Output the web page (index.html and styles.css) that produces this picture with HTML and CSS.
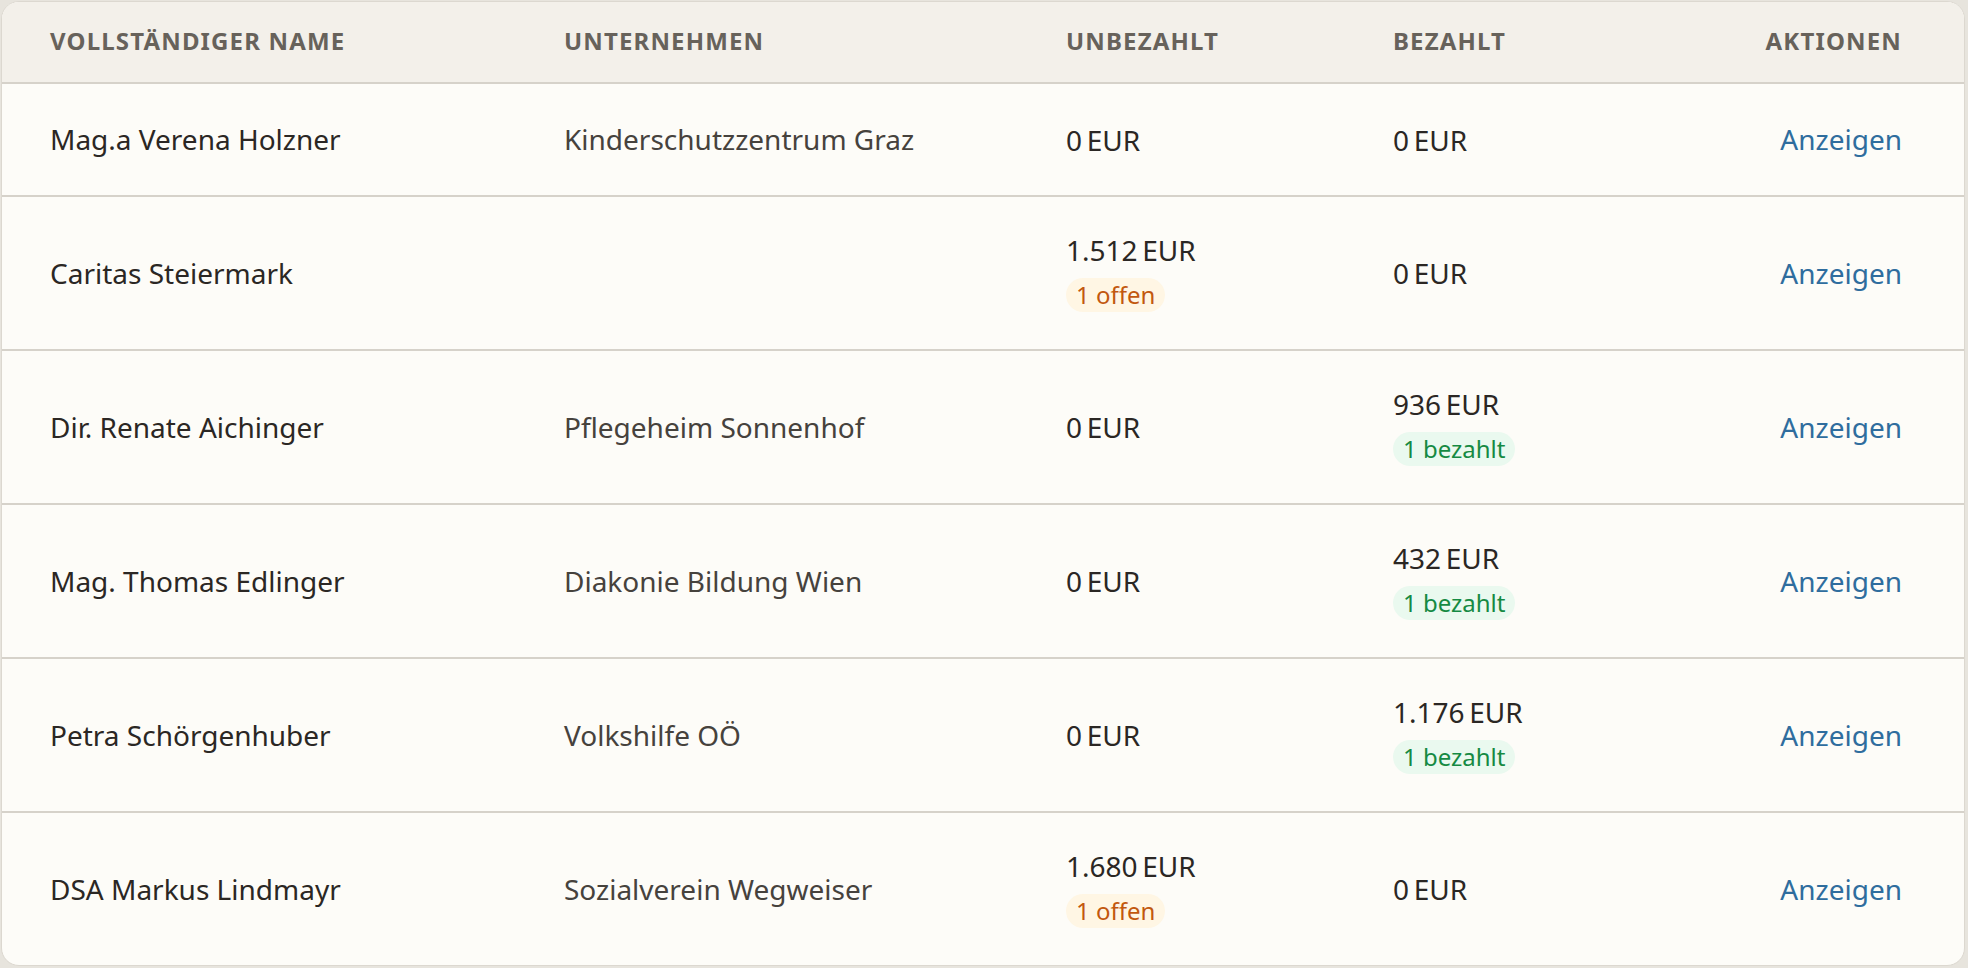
FILE: index.html
```html
<!DOCTYPE html>
<html lang="de">
<head>
<meta charset="utf-8">
<title>Kunden</title>
<link rel="stylesheet" href="styles.css">
</head>
<body>
<div class="card">
  <table class="tbl">
    <colgroup>
      <col class="c-name">
      <col class="c-company">
      <col class="c-unpaid">
      <col class="c-paid">
      <col class="c-actions">
    </colgroup>
    <thead>
      <tr>
        <th>Vollständiger Name</th>
        <th>Unternehmen</th>
        <th>Unbezahlt</th>
        <th>Bezahlt</th>
        <th class="right">Aktionen</th>
      </tr>
    </thead>
    <tbody>
      <tr>
        <td class="name">Mag.a Verena Holzner</td>
        <td class="company">Kinderschutzzentrum Graz</td>
        <td><div class="amount">0&#8239;EUR</div></td>
        <td><div class="amount">0&#8239;EUR</div></td>
        <td class="right"><a class="link" href="#">Anzeigen</a></td>
      </tr>
      <tr>
        <td class="name">Caritas Steiermark</td>
        <td class="company"></td>
        <td><div class="amount">1.512&#8239;EUR</div><span class="badge open">1 offen</span></td>
        <td><div class="amount">0&#8239;EUR</div></td>
        <td class="right"><a class="link" href="#">Anzeigen</a></td>
      </tr>
      <tr>
        <td class="name">Dir. Renate Aichinger</td>
        <td class="company">Pflegeheim Sonnenhof</td>
        <td><div class="amount">0&#8239;EUR</div></td>
        <td><div class="amount">936&#8239;EUR</div><span class="badge paid">1 bezahlt</span></td>
        <td class="right"><a class="link" href="#">Anzeigen</a></td>
      </tr>
      <tr>
        <td class="name">Mag. Thomas Edlinger</td>
        <td class="company">Diakonie Bildung Wien</td>
        <td><div class="amount">0&#8239;EUR</div></td>
        <td><div class="amount">432&#8239;EUR</div><span class="badge paid">1 bezahlt</span></td>
        <td class="right"><a class="link" href="#">Anzeigen</a></td>
      </tr>
      <tr>
        <td class="name">Petra Schörgenhuber</td>
        <td class="company">Volkshilfe OÖ</td>
        <td><div class="amount">0&#8239;EUR</div></td>
        <td><div class="amount">1.176&#8239;EUR</div><span class="badge paid">1 bezahlt</span></td>
        <td class="right"><a class="link" href="#">Anzeigen</a></td>
      </tr>
      <tr>
        <td class="name">DSA Markus Lindmayr</td>
        <td class="company">Sozialverein Wegweiser</td>
        <td><div class="amount">1.680&#8239;EUR</div><span class="badge open">1 offen</span></td>
        <td><div class="amount">0&#8239;EUR</div></td>
        <td class="right"><a class="link" href="#">Anzeigen</a></td>
      </tr>
    </tbody>
  </table>
</div>
</body>
</html>
```

FILE: styles.css
```css
html, body {
  margin: 0;
  padding: 0;
}
body {
  background: #e7e4dd;
  font-family: "Noto Sans", "Open Sans", sans-serif;
  color: #2b2724;
  width: 1968px;
  height: 968px;
  overflow: hidden;
}
.card {
  margin: 1px 3px 1px 1px;
  border: 1px solid #dcd8d0;
  border-radius: 18px;
  background: #fdfcf8;
  overflow: hidden;
}
.tbl {
  width: 100%;
  border-collapse: collapse;
  table-layout: fixed;
}
.c-name { width: 514px; }
.c-company { width: 502px; }
.c-unpaid { width: 327px; }
.c-paid { width: 330px; }
.c-actions { width: auto; }

thead tr {
  background: #f3f0ea;
  border-bottom: 2px solid #d6d2ca;
}
th {
  height: 81px;
  padding: 0 48px 3px;
  box-sizing: border-box;
  text-align: left;
  font-size: 24px;
  font-weight: 700;
  letter-spacing: 1.15px;
  text-transform: uppercase;
  color: #67625b;
  vertical-align: middle;
}
tbody tr {
  border-bottom: 2px solid #d6d2ca;
}
tbody tr:last-child {
  border-bottom: none;
}
td {
  padding: 35px 48px;
  font-size: 28px;
  line-height: 41px;
  vertical-align: middle;
  white-space: nowrap;
}
th.right, td.right {
  text-align: right;
  padding-right: 62px;
}
.name { color: #2b2724; }
.company { color: #46423d; }
.amount {
  color: #2b2724;
  line-height: 36px;
}
.badge {
  display: inline-block;
  margin-top: 10px;
  padding: 0 10px;
  border-radius: 999px;
  font-size: 24px;
  line-height: 34px;
}
.badge.open {
  color: #c2580e;
  background: #fff6e4;
}
.badge.paid {
  color: #168a43;
  background: #eaf9ef;
}
.link {
  color: #2f6d9e;
  text-decoration: none;
}
```
